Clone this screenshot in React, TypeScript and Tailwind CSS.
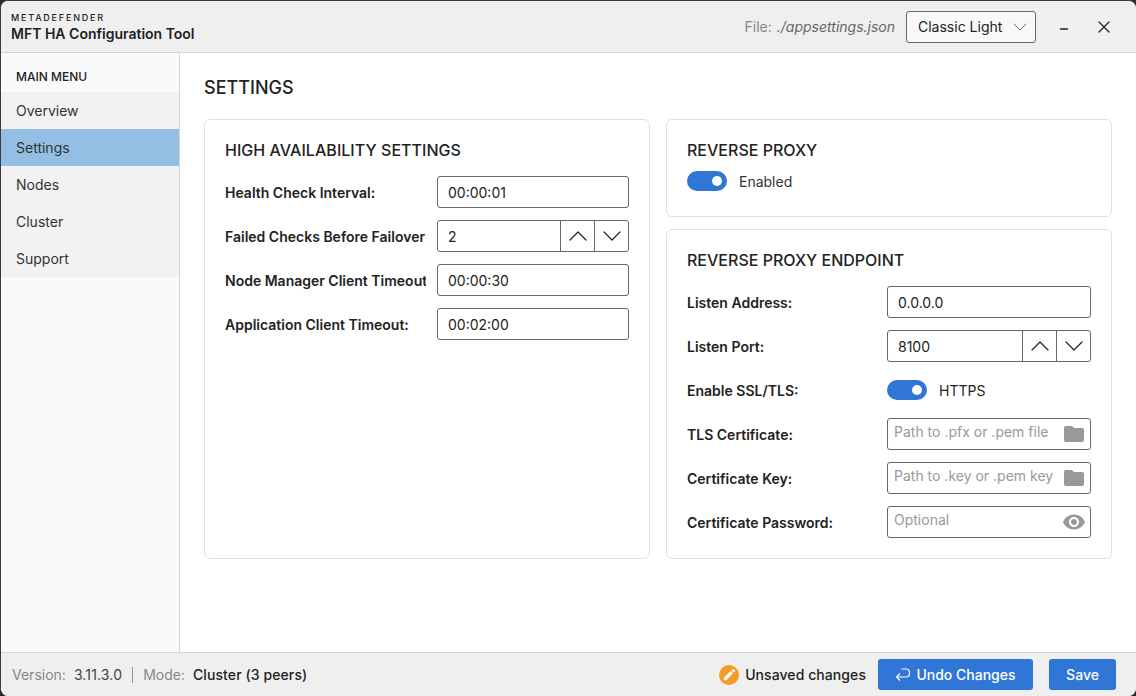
import { ChevronDown, ChevronUp, Minus, X } from "lucide-react";
import { MdEdit, MdFolder, MdVisibility } from "react-icons/md";

const menu = ["Overview", "Settings", "Nodes", "Cluster", "Support"];

function TextBox({ value }: { value: string }) {
  return (
    <div className="flex h-[32px] w-full items-center rounded-[3px] border border-[#666] bg-white px-[10px] text-[14px] text-[#222]">
      {value}
    </div>
  );
}

function Stepper({ value }: { value: string }) {
  return (
    <div className="flex h-[32px] w-full items-center rounded-[3px] border border-[#666] bg-white text-[14px] text-[#222]">
      <span className="flex-1 px-[10px]">{value}</span>
      <span className="flex h-full w-[34px] items-center justify-center border-l border-[#666]">
        <ChevronUp size={32} strokeWidth={0.9} className="text-[#222]" />
      </span>
      <span className="flex h-full w-[34px] items-center justify-center border-l border-[#666]">
        <ChevronDown size={32} strokeWidth={0.9} className="text-[#222]" />
      </span>
    </div>
  );
}

function PathBox({ hint, icon }: { hint: string; icon: "folder" | "eye" }) {
  return (
    <div className="flex h-[32px] w-full items-start justify-between rounded-[3px] border border-[#666] bg-white pl-[6px] pr-[4px] pt-[3px] text-[14px] text-[#999]">
      <span className="whitespace-nowrap leading-[20px]">{hint}</span>
      {icon === "folder" ? (
        <MdFolder size={24} color="#999" className="shrink-0" />
      ) : (
        <MdVisibility size={24} color="#999" className="shrink-0" />
      )}
    </div>
  );
}

function Toggle() {
  return (
    <span className="flex h-[20px] w-[40px] items-center justify-end rounded-full bg-[#2f76d6] pr-[5px]">
      <span className="h-[10px] w-[10px] rounded-full bg-white" />
    </span>
  );
}

function Row({ label, width, children }: { label: string; width: string; children: React.ReactNode }) {
  return (
    <div className="flex h-[32px] items-center">
      <label className={`${width} shrink-0 overflow-hidden whitespace-nowrap text-[14px] font-semibold text-[#222]`}>
        {label}
      </label>
      {children}
    </div>
  );
}

export default function App() {
  return (
    <div className="h-[696px] w-[1136px] overflow-hidden bg-[#2b2b2b] font-['Inter',sans-serif]">
      <div className="flex h-full w-full flex-col overflow-hidden rounded-[8px] border-l border-t border-[#3a3a3a] bg-white">
        <header className="flex h-[52px] shrink-0 items-center border-b border-[#d6d6d6] bg-[#efefef] pl-[10px]">
          <div className="flex-1">
            <div className="mt-[1px] text-[9px] font-medium leading-[12px] tracking-[0.2em] text-[#222]">METADEFENDER</div>
            <div className="mt-[1px] text-[14px] font-semibold leading-[18px] text-[#222]">MFT HA Configuration Tool</div>
          </div>
          <span className="mr-[11px] text-[14px] text-[#888]">
            File: <span className="ml-[1px] italic text-[#666]">./appsettings.json</span>
          </span>
          <div className="flex h-[32px] w-[130px] items-center justify-between rounded-[3px] border border-[#666] bg-[#f8f8f8] pl-[11px] pr-[3px] text-[14px] text-[#222]">
            Classic Light
            <ChevronDown size={24} strokeWidth={0.8} className="text-[#444]" />
          </div>
          <Minus size={12} strokeWidth={3} className="ml-[22px] mt-[5px] text-[#222]" />
          <X size={20} strokeWidth={1.5} className="ml-[24px] mr-[22px] text-[#222]" />
        </header>

        <div className="flex min-h-0 flex-1">
          <nav className="w-[179px] shrink-0 border-r border-[#d6d6d6] bg-[#fafafa]">
            <div className="flex h-[39px] items-end pb-[6px] pl-[15px] text-[12px] font-medium text-[#222]">MAIN MENU</div>
            <ul className="bg-[#f2f2f2]">
              {menu.map((item) => (
                <li
                  key={item}
                  className={`flex h-[37px] items-center pl-[15px] text-[14px] text-[#333] ${item === "Settings" ? "bg-[#95bee4]" : ""}`}
                >
                  {item}
                </li>
              ))}
            </ul>
          </nav>

          <main className="flex-1 px-[24px] pt-[24px]">
            <h1 className="text-[18px] font-medium leading-[22px] text-[#222]">SETTINGS</h1>
            <div className="mt-[20px] grid h-[440px] w-[908px] grid-cols-2 gap-x-[16px]">
              <section className="rounded-[6px] border border-[#e0e0e0] px-[20px] pt-[20px]">
                <h2 className="text-[16px] font-medium leading-[20px] tracking-[0.04px] text-[#222]">HIGH AVAILABILITY SETTINGS</h2>
                <div className="mt-[16px] flex flex-col gap-[12px]">
                  <Row label="Health Check Interval:" width="mr-[11px] w-[201px]">
                    <TextBox value="00:00:01" />
                  </Row>
                  <Row label="Failed Checks Before Failover:" width="mr-[11px] w-[201px]">
                    <Stepper value="2" />
                  </Row>
                  <Row label="Node Manager Client Timeout:" width="mr-[11px] w-[201px]">
                    <TextBox value="00:00:30" />
                  </Row>
                  <Row label="Application Client Timeout:" width="mr-[11px] w-[201px]">
                    <TextBox value="00:02:00" />
                  </Row>
                </div>
              </section>

              <div className="flex flex-col gap-[12px]">
                <section className="h-[98px] rounded-[6px] border border-[#e0e0e0] px-[20px] pt-[20px]">
                  <h2 className="text-[16px] font-medium leading-[20px] text-[#222]">REVERSE PROXY</h2>
                  <div className="mt-[9px] flex items-center gap-[12px] text-[14px] text-[#333]">
                    <Toggle />
                    <span className="mt-[2px]">Enabled</span>
                  </div>
                </section>
                <section className="flex-1 rounded-[6px] border border-[#e0e0e0] px-[20px] pt-[20px]">
                  <h2 className="text-[16px] font-medium leading-[20px] text-[#222]">REVERSE PROXY ENDPOINT</h2>
                  <div className="mt-[16px] flex flex-col gap-[12px]">
                    <Row label="Listen Address:" width="w-[200px]">
                      <TextBox value="0.0.0.0" />
                    </Row>
                    <Row label="Listen Port:" width="w-[200px]">
                      <Stepper value="8100" />
                    </Row>
                    <Row label="Enable SSL/TLS:" width="w-[200px]">
                      <div className="flex items-center gap-[12px] text-[14px] text-[#222]">
                        <Toggle />
                        HTTPS
                      </div>
                    </Row>
                    <Row label="TLS Certificate:" width="w-[200px]">
                      <PathBox hint="Path to .pfx or .pem file" icon="folder" />
                    </Row>
                    <Row label="Certificate Key:" width="w-[200px]">
                      <PathBox hint="Path to .key or .pem key" icon="folder" />
                    </Row>
                    <Row label="Certificate Password:" width="w-[200px]">
                      <PathBox hint="Optional" icon="eye" />
                    </Row>
                  </div>
                </section>
              </div>
            </div>
          </main>
        </div>

        <footer className="flex h-[44px] shrink-0 items-center border-t border-[#d6d6d6] bg-[#efefef] pl-[11px] pr-[20px] text-[14px]">
          <span className="text-[#888]">Version:</span>
          <span className="ml-[8px] tracking-[0.15px] text-[#444]">3.11.3.0</span>
          <span className="mx-[10px] h-[16px] w-px bg-[#8a8fb0]" />
          <span className="text-[#888]">Mode:</span>
          <span className="ml-[8px] font-medium tracking-[0.1px] text-[#222]">Cluster (3 peers)</span>
          <span className="ml-auto flex h-[20px] w-[20px] items-center justify-center rounded-full bg-[#f59a23]">
            <MdEdit size={15} color="white" />
          </span>
          <span className="ml-[6px] font-medium tracking-[0.07px] text-[#222]">Unsaved changes</span>
          <button className="ml-[12px] flex h-[31px] w-[155px] items-center justify-center gap-[5px] rounded-[3px] bg-[#2f76d6] font-medium text-white">
            <svg width="16" height="14" viewBox="0 0 16 14" fill="none" stroke="white" strokeWidth="1.2">
              <path d="M5 5.5 1.5 9 5 12.5M1.5 9H11Q14.5 9 14.5 5T11 1H6.5" />
            </svg>
            Undo Changes
          </button>
          <button className="ml-[16px] h-[31px] w-[67px] rounded-[3px] bg-[#2f76d6] font-medium text-white">Save</button>
        </footer>
      </div>
    </div>
  );
}
